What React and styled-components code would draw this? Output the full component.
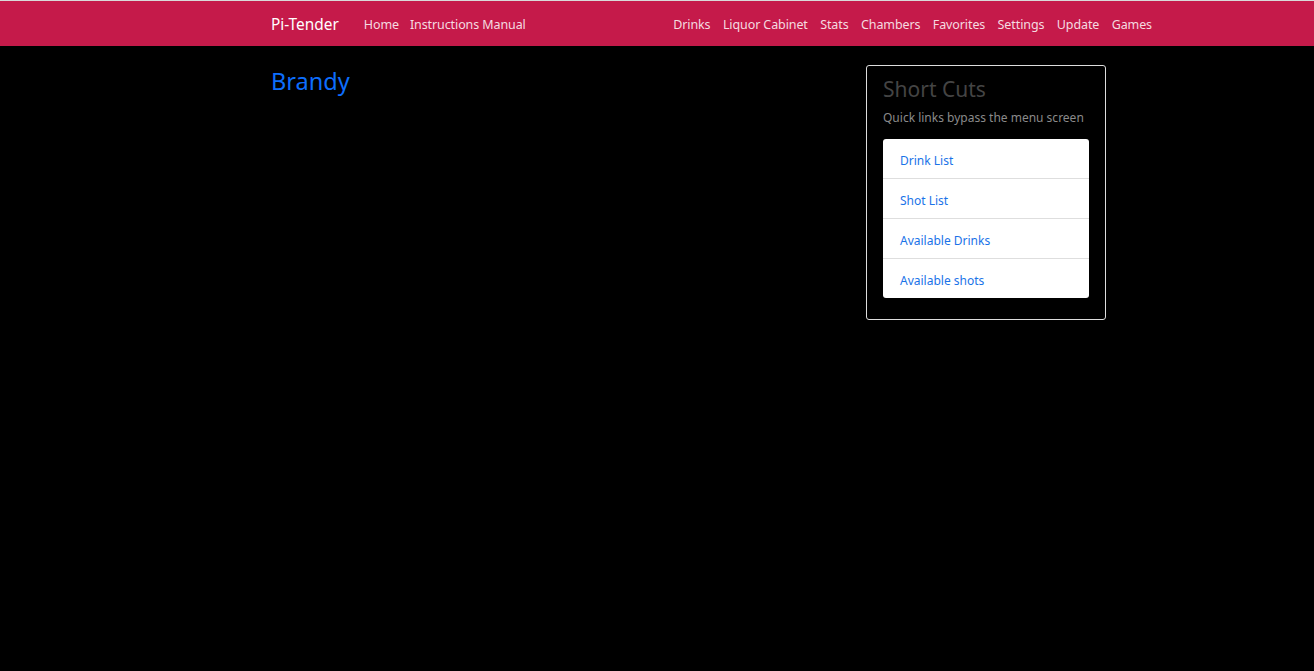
import React from 'react';
import styled, { createGlobalStyle } from 'styled-components';

const Global = createGlobalStyle`
  html, body {
    margin: 0;
    padding: 0;
    background: #000;
    font-family: "Noto Sans", "Open Sans", sans-serif;
  }
  * { box-sizing: border-box; }
`;

const TopLine = styled.div`
  height: 1px;
  background: #d9d9d9;
`;

const Navbar = styled.nav`
  height: 45px;
  background: #c51a4a;
  display: flex;
  align-items: center;
  padding-top: 2px;
`;

const NavInner = styled.div`
  margin-left: 271px;
  width: 881px;
  display: flex;
  align-items: center;
  justify-content: space-between;
`;

const Group = styled.div`
  display: flex;
  align-items: center;
  gap: ${p => p.gap || '12px'};
`;

const Brand = styled.a`
  color: #fff;
  font-size: 15.4px;
  margin-right: 14px;
  text-decoration: none;
`;

const NavLink = styled.a`
  color: rgba(255, 255, 255, 0.85);
  font-size: 12.5px;
  text-decoration: none;
  letter-spacing: -0.1px;
`;

const Main = styled.div`
  margin-left: 271px;
  width: 835px;
  padding-top: 19px;
  display: flex;
  justify-content: space-between;
  align-items: flex-start;
`;

const Title = styled.h1`
  margin: 0;
  color: #0d6efd;
  font-size: 23.5px;
  font-weight: 400;
`;

const Side = styled.div`
  width: 240px;
  border: 1px solid #ddd;
  border-radius: 3px;
  padding: 9px 16px 21px 16px;
`;

const SideTitle = styled.h3`
  margin: 0;
  color: #444;
  font-size: 21px;
  font-weight: 400;
  line-height: 28px;
`;

const SideText = styled.p`
  margin: 6px 0 13px 0;
  color: #8a8a8a;
  font-size: 12px;
`;

const List = styled.div`
  background: #fff;
  border-radius: 3px;
  overflow: hidden;
`;

const Item = styled.a`
  display: block;
  height: ${p => (p.last ? '39px' : '40px')};
  line-height: 40px;
  padding: 2px 0 0 17px;
  color: #1a73e8;
  font-size: 12px;
  text-decoration: none;
  border-bottom: ${p => (p.last ? 'none' : '1px solid #dedede')};
`;

const left = ['Home', 'Instructions Manual'];
const right = ['Drinks', 'Liquor Cabinet', 'Stats', 'Chambers', 'Favorites', 'Settings', 'Update', 'Games'];
const links = ['Drink List', 'Shot List', 'Available Drinks', 'Available shots'];

export default function App() {
  return (
    <>
      <Global />
      <TopLine />
      <Navbar>
        <NavInner>
          <Group gap="11px">
            <Brand>Pi-Tender</Brand>
            {left.map(l => <NavLink key={l}>{l}</NavLink>)}
          </Group>
          <Group gap="12.4px">
            {right.map(l => <NavLink key={l}>{l}</NavLink>)}
          </Group>
        </NavInner>
      </Navbar>
      <Main>
        <Title>Brandy</Title>
        <Side>
          <SideTitle>Short Cuts</SideTitle>
          <SideText>Quick links bypass the menu screen</SideText>
          <List>
            {links.map((l, i) => (
              <Item key={l} last={i === links.length - 1}>{l}</Item>
            ))}
          </List>
        </Side>
      </Main>
    </>
  );
}
